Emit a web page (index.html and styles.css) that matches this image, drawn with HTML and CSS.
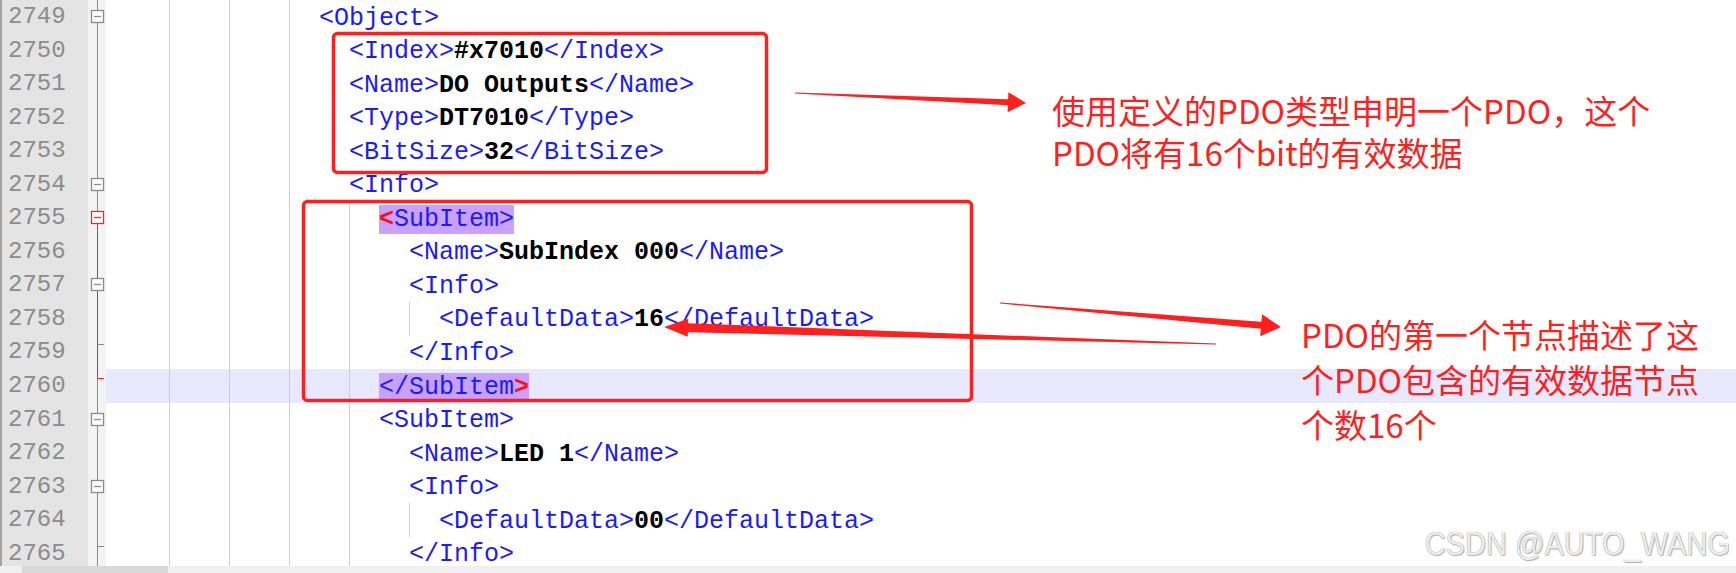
FILE: index.html
```html
<!DOCTYPE html>
<html lang="zh-CN">
<head>
<meta charset="UTF-8">
<title>ESI XML - PDO</title>
<link rel="stylesheet" href="styles.css">
</head>
<body>
<svg class="defs" aria-hidden="true">
  <symbol id="fl" viewBox="0 0 18 34"><path d="M9.5 0V34" fill="none" stroke="#8c8c8c"/></symbol>
  <symbol id="fb" viewBox="0 0 18 34"><path d="M9.5 0V34" fill="none" stroke="#8c8c8c"/><rect x="3.5" y="10.5" width="12" height="12" fill="#fff" stroke="#8c8c8c" stroke-width="1.3"/><path d="M6 16.5H13" stroke="#8c8c8c" stroke-width="1.3"/></symbol>
  <symbol id="fr" viewBox="0 0 18 34"><path d="M9.5 0V12" fill="none" stroke="#8c8c8c"/><path d="M9.5 20V34" fill="none" stroke="#ff2020"/><rect x="3.5" y="10.5" width="12" height="12" fill="#fff" stroke="#ff2020" stroke-width="1.3"/><path d="M6 16.5H13" stroke="#ff2020" stroke-width="1.3"/></symbol>
  <symbol id="rl" viewBox="0 0 18 34"><path d="M9.5 0V34" fill="none" stroke="#ff2020"/></symbol>
  <symbol id="rb" viewBox="0 0 18 34"><path d="M9.5 0V34" fill="none" stroke="#ff2020"/><rect x="3.5" y="10.5" width="12" height="12" fill="#fff" stroke="#8c8c8c" stroke-width="1.3"/><path d="M6 16.5H13" stroke="#8c8c8c" stroke-width="1.3"/></symbol>
  <symbol id="rt" viewBox="0 0 18 34"><path d="M9.5 0V34" fill="none" stroke="#ff2020"/><path d="M9.5 9.5H16" fill="none" stroke="#8c8c8c"/></symbol>
  <symbol id="re" viewBox="0 0 18 34"><path d="M9.5 0V34" fill="none" stroke="#8c8c8c"/><path d="M9.5 0V9.5H16" fill="none" stroke="#ff2020"/></symbol>
  <symbol id="ft" viewBox="0 0 18 34"><path d="M9.5 0V34" fill="none" stroke="#8c8c8c"/><path d="M9.5 9.5H16" fill="none" stroke="#8c8c8c"/></symbol>
</svg>

<div class="editor">
  <div class="line"><span class="ln">2749</span><span class="fold"><svg><use href="#fb"/></svg></span><span class="code"><span class="ind c14"></span><span class="src">&lt;Object&gt;</span></span></div>
  <div class="line"><span class="ln">2750</span><span class="fold"><svg><use href="#fl"/></svg></span><span class="code"><span class="ind c16"></span><span class="src">&lt;Index&gt;<b>#x7010</b>&lt;/Index&gt;</span></span></div>
  <div class="line"><span class="ln">2751</span><span class="fold"><svg><use href="#fl"/></svg></span><span class="code"><span class="ind c16"></span><span class="src">&lt;Name&gt;<b>DO Outputs</b>&lt;/Name&gt;</span></span></div>
  <div class="line"><span class="ln">2752</span><span class="fold"><svg><use href="#fl"/></svg></span><span class="code"><span class="ind c16"></span><span class="src">&lt;Type&gt;<b>DT7010</b>&lt;/Type&gt;</span></span></div>
  <div class="line"><span class="ln">2753</span><span class="fold"><svg><use href="#fl"/></svg></span><span class="code"><span class="ind c16"></span><span class="src">&lt;BitSize&gt;<b>32</b>&lt;/BitSize&gt;</span></span></div>
  <div class="line"><span class="ln">2754</span><span class="fold"><svg><use href="#fb"/></svg></span><span class="code"><span class="ind c16"></span><span class="src">&lt;Info&gt;</span></span></div>
  <div class="line"><span class="ln">2755</span><span class="fold"><svg><use href="#fr"/></svg></span><span class="code"><span class="ind c18"></span><span class="src"><span class="mt"><b class="br">&lt;</b>SubItem&gt;</span></span></span></div>
  <div class="line"><span class="ln">2756</span><span class="fold"><svg><use href="#rl"/></svg></span><span class="code"><span class="ind c20"></span><span class="src">&lt;Name&gt;<b>SubIndex 000</b>&lt;/Name&gt;</span></span></div>
  <div class="line"><span class="ln">2757</span><span class="fold"><svg><use href="#rb"/></svg></span><span class="code"><span class="ind c20"></span><span class="src">&lt;Info&gt;</span></span></div>
  <div class="line"><span class="ln">2758</span><span class="fold"><svg><use href="#rl"/></svg></span><span class="code"><span class="ind c22"></span><span class="src">&lt;DefaultData&gt;<b>16</b>&lt;/DefaultData&gt;</span></span></div>
  <div class="line"><span class="ln">2759</span><span class="fold"><svg><use href="#rt"/></svg></span><span class="code"><span class="ind c20"></span><span class="src">&lt;/Info&gt;</span></span></div>
  <div class="line cur"><span class="ln">2760</span><span class="fold"><svg><use href="#re"/></svg></span><span class="code"><span class="ind c18"></span><span class="src"><span class="mt">&lt;/SubItem<b class="br">&gt;</b></span></span></span></div>
  <div class="line"><span class="ln">2761</span><span class="fold"><svg><use href="#fb"/></svg></span><span class="code"><span class="ind c18"></span><span class="src">&lt;SubItem&gt;</span></span></div>
  <div class="line"><span class="ln">2762</span><span class="fold"><svg><use href="#fl"/></svg></span><span class="code"><span class="ind c20"></span><span class="src">&lt;Name&gt;<b>LED 1</b>&lt;/Name&gt;</span></span></div>
  <div class="line"><span class="ln">2763</span><span class="fold"><svg><use href="#fb"/></svg></span><span class="code"><span class="ind c20"></span><span class="src">&lt;Info&gt;</span></span></div>
  <div class="line"><span class="ln">2764</span><span class="fold"><svg><use href="#fl"/></svg></span><span class="code"><span class="ind c22"></span><span class="src">&lt;DefaultData&gt;<b>00</b>&lt;/DefaultData&gt;</span></span></div>
  <div class="line"><span class="ln">2765</span><span class="fold"><svg><use href="#ft"/></svg></span><span class="code"><span class="ind c20"></span><span class="src">&lt;/Info&gt;</span></span></div>
</div>
<div class="hscroll"><span class="sb-btn"></span><span class="sb-thumb"></span></div>

<!-- annotations drawn over the screenshot -->
<div class="annot">
  <svg width="1736" height="573" viewBox="0 0 1736 573">
    <rect x="333.5" y="33.5" width="433" height="139" rx="4" fill="none" stroke="#ff1f1f" stroke-width="3.5"/>
    <rect x="303.5" y="201.5" width="668" height="199" rx="4" fill="none" stroke="#ff1f1f" stroke-width="3.5"/>
    <polygon fill="#ff1f1f" points="795,92.5 1008.1,99.2 1008.4,92.2 1026,103 1007.6,112.2 1007.9,105.2 795,93.5"/>
    <polygon fill="#ff1f1f" points="1000,302.5 1261.4,321.8 1262,314.3 1281,327 1260.2,336.3 1260.8,328.8 1000,303.5"/>
    <polygon fill="#ff1f1f" points="1216,343.5 688.1,323.2 688.3,318.7 664,327 687.7,336.7 687.9,332.2 1216,344.5"/>
  </svg>
  <div class="note note1">使用定义的PDO类型申明一个PDO，这个<br>PDO将有16个bit的有效数据</div>
  <div class="note note2">PDO的第一个节点描述了这<br>个PDO包含的有效数据节点<br>个数16个</div>
  <div class="mark">CSDN @AUTO_WANG</div>
</div>
</body>
</html>
```

FILE: styles.css
```css
body {
    margin: 0;
    width: 1736px;
    height: 573px;
    overflow: hidden;
    position: relative;
    background: #fff;
    font-family: "Liberation Mono", "Courier New", monospace;
}
.defs {
    position: absolute;
    width: 0;
    height: 0;
    overflow: hidden;
}
.editor {
    height: 566px;
    overflow: hidden;
    border-left: 2px solid #a3a3a3;
}
.line {
    display: grid;
    grid-template-columns: 86px 18px 1fr;
    height: 33.55px;
}
.ln {
    background: #e4e4e4;
    color: #8c8c8c;
    font-size: 24px;
    line-height: 33.55px;
    padding-left: 6px;
}
.fold {
    background: #f3f3f3;
}
.fold svg {
    display: block;
    width: 18px;
    height: 34px;
}
.code {
    display: flex;
    align-items: center;
    padding-left: 3px;
    padding-top: 2px;
    font-size: 25px;
    white-space: pre;
}
.cur .code {
    background: #e8e8ff;
}
.ind {
    align-self: stretch;
    box-sizing: border-box;
    margin-top: -2px;
    padding-left: 60px;
    background: linear-gradient(to right, #cfcfcf 1px, transparent 1px) 0 0 / 60px 100% repeat-x content-box;
}
.c14 { width: 210px; }
.c16 { width: 240px; }
.c18 { width: 270px; }
.c20 { width: 300px; }
.c22 { width: 330px; }
.src {
    color: #1a1aff;
}
.src b {
    color: #000;
}
.mt {
    background: #c8a0ff;
}
.mt .br {
    color: #ff1010;
}
.hscroll {
    display: flex;
    height: 7px;
    background: #f0f0f0;
}
.sb-btn {
    width: 22px;
}
.sb-thumb {
    width: 146px;
    background: #d8d8d8;
}
.annot {
    position: absolute;
    left: 0;
    top: 0;
    width: 1736px;
    height: 573px;
    pointer-events: none;
}
.annot svg {
    position: absolute;
    left: 0;
    top: 0;
}
.note {
    position: absolute;
    color: #ff1f1f;
    font-family: "Noto Sans CJK SC", sans-serif;
    font-size: 33px;
    white-space: nowrap;
}
.note1 {
    left: 1052px;
    top: 89px;
    line-height: 42px;
}
.note2 {
    left: 1301px;
    top: 312px;
    line-height: 45px;
}
.mark {
    position: absolute;
    right: 6px;
    top: 525px;
    font-family: "Liberation Sans", Arial, sans-serif;
    font-size: 33px;
    line-height: 38px;
    color: #ededed;
    text-shadow: 0 0 1px #8a8a8a, 1px 1px 1px #b5b5b5;
    transform: scaleX(0.88);
    transform-origin: right center;
    white-space: nowrap;
}
```
